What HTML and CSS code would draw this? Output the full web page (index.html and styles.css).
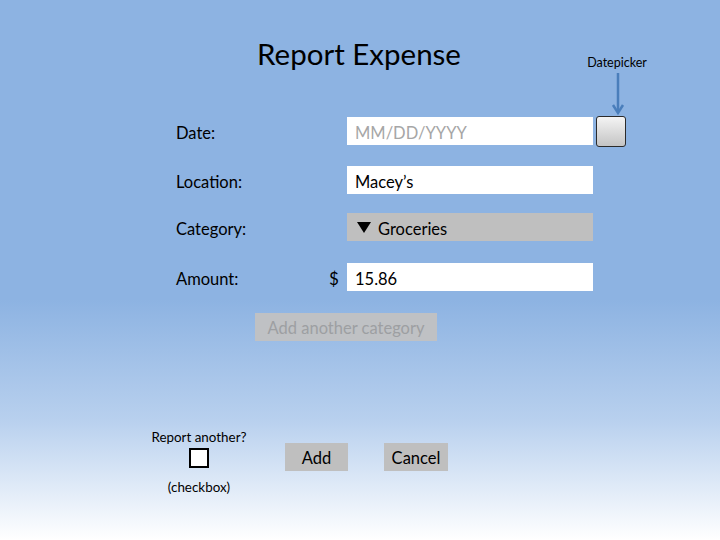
FILE: index.html
```html
<!DOCTYPE html>
<html>
<head>
<meta charset="utf-8">
<link rel="stylesheet" href="styles.css">
</head>
<body>
<div class="page">
  <h1 class="title">Report Expense</h1>

  <div class="annotation">
    <span class="annotation-text">Datepicker</span>
    <svg class="annotation-arrow" width="14" height="44" viewBox="0 0 14 44">
      <line x1="7" y1="0" x2="7" y2="38" stroke="#4a7ebb" stroke-width="2.5"/>
      <polyline points="2,32 7,40 12,32" fill="none" stroke="#4a7ebb" stroke-width="2.5"/>
    </svg>
  </div>

  <div class="form">
    <div class="row row-date">
      <div class="label">Date:</div>
      <div class="currency"></div>
      <div class="field placeholder">MM/DD/YYYY</div>
      <div class="datepicker"></div>
    </div>

    <div class="row row-location">
      <div class="label">Location:</div>
      <div class="currency"></div>
      <div class="field">Macey’s</div>
    </div>

    <div class="row row-category">
      <div class="label">Category:</div>
      <div class="currency"></div>
      <div class="field select"><span class="triangle"></span>Groceries</div>
    </div>

    <div class="row row-amount">
      <div class="label">Amount:</div>
      <div class="currency">$</div>
      <div class="field">15.86</div>
    </div>
  </div>

  <div class="add-category">Add another category</div>

  <div class="actions">
    <div class="report">
      <div class="report-label">Report another?</div>
      <div class="checkbox"></div>
      <div class="report-note">(checkbox)</div>
    </div>
    <div class="btn btn-add">Add</div>
    <div class="btn btn-cancel">Cancel</div>
  </div>
</div>
</body>
</html>
```

FILE: styles.css
```css
html, body {
  margin: 0;
  padding: 0;
}

body {
  font-family: Lato, "Liberation Sans", sans-serif;
  color: #000;
}

.page {
  position: relative;
  width: 720px;
  height: 540px;
  box-sizing: border-box;
  padding-top: 34px;
  background: linear-gradient(to bottom, #8db3e2 0px, #8db3e2 300px, #b8d0ee 420px, #ffffff 540px);
  overflow: hidden;
}

.title {
  margin: 0;
  font-size: 29.5px;
  font-weight: normal;
  line-height: 40px;
  text-align: center;
  padding-right: 2px;
}

.annotation {
  position: absolute;
  left: 582px;
  top: 55px;
  width: 70px;
  display: flex;
  flex-direction: column;
  align-items: center;
}

.annotation-text {
  font-size: 12.5px;
  line-height: 16px;
}

.annotation-arrow {
  display: block;
  margin-top: 2px;
  margin-left: 2px;
}

.form {
  display: flex;
  flex-direction: column;
  margin-top: 43px;
  padding-left: 176px;
}

.row {
  display: flex;
  align-items: center;
  height: 28px;
}

.row-location {
  margin-top: 21px;
}

.row-category {
  margin-top: 19px;
}

.row-amount {
  margin-top: 22px;
}

.label {
  width: 153px;
  font-size: 16.5px;
  padding-top: 3px;
}

.currency {
  width: 18px;
  font-size: 17px;
  padding-top: 3px;
}

.field {
  width: 246px;
  height: 28px;
  background: #ffffff;
  font-size: 16.5px;
  padding: 3px 0 0 8px;
  box-sizing: border-box;
  display: flex;
  align-items: center;
}

.placeholder {
  color: #a6a6a6;
}

.select {
  background: #bfbfbf;
  padding-left: 10px;
}

.triangle {
  width: 0;
  height: 0;
  border-left: 7px solid transparent;
  border-right: 7px solid transparent;
  border-top: 11px solid #000;
  margin-right: 7px;
  margin-top: -2px;
}

.datepicker {
  flex: none;
  width: 30px;
  height: 31px;
  margin-left: 3px;
  box-sizing: border-box;
  border: 1.5px solid #2b2b2b;
  border-radius: 3px;
  background: linear-gradient(to bottom, #f4f4f4, #c4c4c4);
}

.add-category {
  margin: 22px 0 0 255px;
  width: 182px;
  height: 28px;
  box-sizing: border-box;
  padding-top: 2px;
  line-height: 26px;
  background: #bfc1c4;
  color: #9d9fa2;
  font-size: 16.5px;
  text-align: center;
}

.actions {
  display: flex;
  align-items: flex-start;
  margin-top: 88px;
  padding-left: 149px;
}

.report {
  width: 100px;
  display: flex;
  flex-direction: column;
  align-items: center;
}

.report-label {
  font-size: 13.4px;
  line-height: 16px;
}

.checkbox {
  width: 20px;
  height: 20px;
  box-sizing: border-box;
  border: 2px solid #000;
  background: #fff;
  margin-top: 3px;
}

.report-note {
  font-size: 13.4px;
  line-height: 16px;
  margin-top: 11px;
}

.btn {
  height: 28px;
  box-sizing: border-box;
  padding-top: 2px;
  line-height: 26px;
  background: #bfbfbf;
  font-size: 16.5px;
  text-align: center;
  margin-top: 14px;
}

.btn-add {
  width: 63px;
  margin-left: 36px;
}

.btn-cancel {
  width: 64px;
  margin-left: 36px;
}
```
